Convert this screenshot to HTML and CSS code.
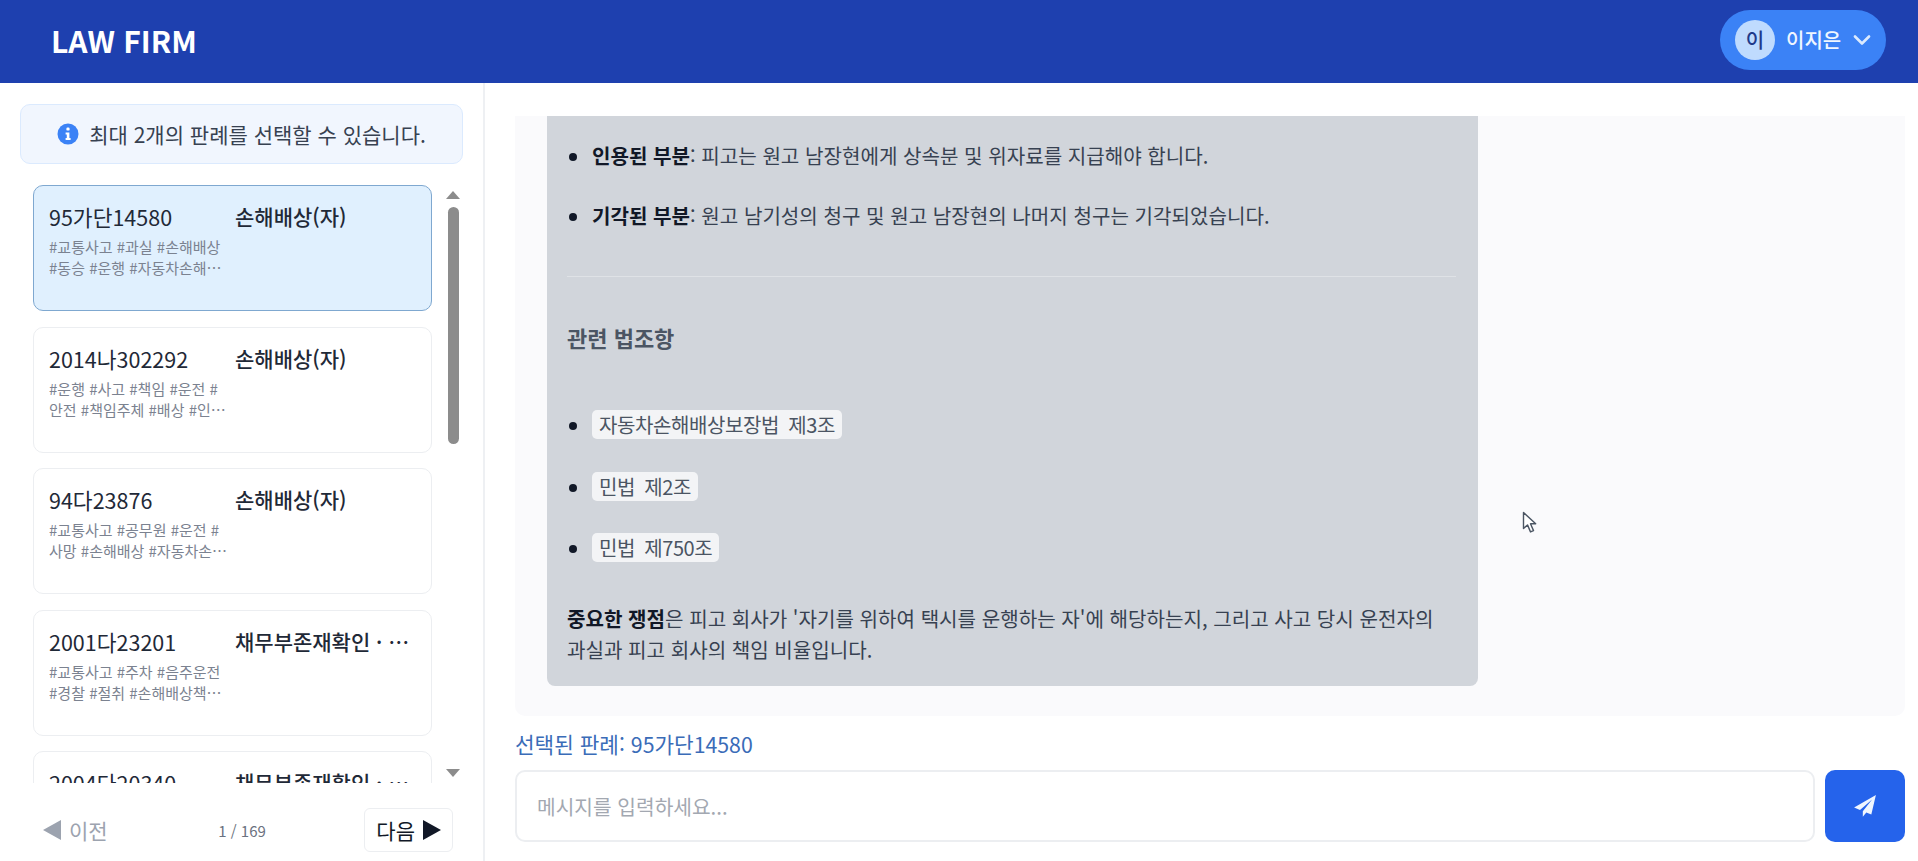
FILE: index.html
```html
<!DOCTYPE html>
<html lang="ko">
<head>
<meta charset="UTF-8">
<meta name="viewport" content="width=device-width,initial-scale=1.0">
<title>Law Firm</title>
<link rel="stylesheet" href="styles.css">
</head>
<body>
<header class="topbar">
<div class="logo">LAW FIRM</div>
<div class="user">
<span class="avatar">이</span>
<span class="user-name">이지은</span>
<svg class="chevron" width="18" height="10" viewBox="0 0 18 10"><path d="M2 1.5l7 7 7-7" fill="none" stroke="#dbeafe" stroke-width="2.6" stroke-linecap="round" stroke-linejoin="round"/></svg>
</div>
</header>
<div class="main">
<aside class="sidebar">
<div class="notice">
<svg width="22" height="22" viewBox="0 0 22 22"><circle cx="11" cy="11" r="10.5" fill="#3b82f6"/><rect x="9.4" y="4.6" width="3.2" height="3" rx="1.2" fill="#fff"/><path d="M8.6 9.4h3.8v5.6h1.2v2H8.6v-2h1.2v-3.6H8.6z" fill="#fff"/></svg>
<span>최대 2개의 판례를 선택할 수 있습니다.</span>
</div>
<div class="list-wrap">
<div class="case-list">
<div class="case selected">
<div class="case-no">95가단14580</div>
<div class="case-type">손해배상(자)</div>
<div class="case-tags">#교통사고 #과실 #손해배상 #동승 #운행 #자동차손해배상보장법</div>
</div>
<div class="case">
<div class="case-no">2014나302292</div>
<div class="case-type">손해배상(자)</div>
<div class="case-tags">#운행 #사고 #책임 #운전 # 안전 #책임주체 #배상 #인명피해 #보험</div>
</div>
<div class="case">
<div class="case-no">94다23876</div>
<div class="case-type">손해배상(자)</div>
<div class="case-tags">#교통사고 #공무원 #운전 # 사망 #손해배상 #자동차손해배상보장법</div>
</div>
<div class="case">
<div class="case-no">2001다23201</div>
<div class="case-type">채무부존재확인 · 손해배상</div>
<div class="case-tags">#교통사고 #주차 #음주운전 #경찰 #절취 #손해배상책임 #보험금</div>
</div>
<div class="case">
<div class="case-no">2004다20340</div>
<div class="case-type">채무부존재확인 · 손해배상</div>
<div class="case-tags">#교통사고 #보험 #운전</div>
</div>
</div>
<div class="scrollbar">
<span class="arrow-up"></span>
<div class="track"><div class="thumb"></div></div>
<span class="arrow-down"></span>
</div>
</div>
<div class="pager">
<button class="page-btn disabled"><span class="tri-left"></span>이전</button>
<span class="page-num">1 / 169</span>
<button class="page-btn next">다음<span class="tri-right"></span></button>
</div>
</aside>
<section class="content">
<div class="chat">
<div class="bubble">
<ul class="points">
<li><strong>인용된 부분</strong>: 피고는 원고 남장현에게 상속분 및 위자료를 지급해야 합니다.</li>
<li><strong>기각된 부분</strong>: 원고 남기성의 청구 및 원고 남장현의 나머지 청구는 기각되었습니다.</li>
</ul>
<hr>
<h3>관련 법조항</h3>
<ul class="laws">
<li><code>자동차손해배상보장법 제3조</code></li>
<li><code>민법 제2조</code></li>
<li><code>민법 제750조</code></li>
</ul>
<p><strong>중요한 쟁점</strong>은 피고 회사가 '자기를 위하여 택시를 운행하는 자'에 해당하는지, 그리고 사고 당시 운전자의 과실과 피고 회사의 책임 비율입니다.</p>
</div>
<svg class="cursor" width="16" height="24" viewBox="0 0 16 24"><path d="M1.5 1.5v16l4-3.6 3 7 3-1.3-3-6.8h5.2z" fill="#fff" stroke="#4b5563" stroke-width="1.4" stroke-linejoin="round"/></svg>
</div>
<div class="selected-label">선택된 판례: 95가단14580</div>
<div class="composer">
<div class="input">메시지를 입력하세요...</div>
<button class="send">
<svg width="24" height="24" viewBox="0 0 22 22"><path d="M21 1L1 12.4l5.4 2.2L17.5 5 9 15.8v5l3.2-3.8 4.6 1.9z" fill="#eff6ff"/></svg>
</button>
</div>
</section>
</div>
</body>
</html>
```
FILE: styles.css
```css
*{
box-sizing:border-box;
}
html,body{
margin:0;
height:100%;
overflow:hidden;
}
body{
font-family:"Noto Sans CJK KR","Noto Sans",sans-serif;
background:#ffffff;
color:#1f2937;
display:flex;
flex-direction:column;
}
.topbar{
height:83px;
flex:none;
background:#1e40af;
display:flex;
align-items:center;
justify-content:space-between;
padding:0 32px 0 51px;
color:#fff;
}
.logo{
font-size:30px;
font-weight:700;
margin-top:-4px;
}
.user{
height:60px;
width:166px;
margin-top:-4px;
background:#3b82f6;
border-radius:30px;
display:flex;
align-items:center;
padding:0 15px;
}
.avatar{
width:40px;
height:40px;
flex:none;
border-radius:50%;
background:#bfdbfe;
color:#1e3a8a;
font-size:20px;
font-weight:500;
display:flex;
align-items:center;
justify-content:center;
}
.user-name{
font-size:20px;
font-weight:500;
margin:0 12px 0 11px;
color:#eff6ff;
white-space:nowrap;
}
.chevron{
flex:none;
}
.main{
flex:1;
display:flex;
min-height:0;
}
.sidebar{
width:485px;
flex:none;
border-right:2px solid #eef0f3;
padding:21px 0 0 20px;
display:flex;
flex-direction:column;
}
.notice{
width:443px;
height:60px;
flex:none;
background:#f1f6fe;
border:1px solid #dbeafe;
border-radius:10px;
display:flex;
align-items:center;
justify-content:center;
gap:10px;
font-size:21px;
color:#374151;
}
.list-wrap{
flex:1;
min-height:0;
display:flex;
margin-top:21px;
overflow:hidden;
}
.case-list{
width:399px;
margin-left:13px;
display:flex;
flex-direction:column;
gap:15.5px;
}
.case{
height:126px;
flex:none;
background:#fff;
border:1px solid #eceef1;
border-radius:10px;
padding:15px 15px 0;
display:grid;
grid-template-columns:186px minmax(0,1fr);
align-content:start;
row-gap:4px;
}
.case.selected{
background:#e0f0fe;
border-color:#7fa8d0;
}
.case-no{
font-size:21.5px;
color:#1f2937;
white-space:nowrap;
}
.case-type{
font-size:21px;
font-weight:500;
color:#1f2937;
white-space:nowrap;
overflow:hidden;
text-overflow:ellipsis;
}
.case-tags{
width:181px;
font-size:15px;
line-height:21px;
color:#7b8290;
overflow:hidden;
display:-webkit-box;
-webkit-box-orient:vertical;
-webkit-line-clamp:2;
}
.scrollbar{
width:14px;
margin:6px 0 0 14px;
display:flex;
flex-direction:column;
align-items:center;
}
.arrow-up{
border:7px solid transparent;
border-top:0;
border-bottom:8px solid #8c8c8c;
}
.arrow-down{
border:7px solid transparent;
border-bottom:0;
border-top:8px solid #8c8c8c;
margin-bottom:6px;
}
.track{
flex:1;
width:100%;
margin:8px 0 7px;
}
.thumb{
width:11px;
height:237px;
margin:0 auto;
border-radius:6px;
background:#8c8c8c;
}
.pager{
height:78px;
flex:none;
width:440px;
display:flex;
align-items:center;
justify-content:space-between;
padding:0 7px 0 23px;
}
.page-btn{
height:44px;
font-family:inherit;
font-size:21px;
color:#111827;
background:#fff;
border:1px solid #eceef1;
border-radius:6px;
display:flex;
align-items:center;
gap:8px;
padding:0 11px;
margin-top:16px;
}
.page-btn.disabled{
border:0;
padding:0;
color:#9ca3af;
}
.tri-left{
border:10px solid transparent;
border-left:0;
border-right:18px solid #9ca3af;
}
.tri-right{
border:10px solid transparent;
border-right:0;
border-left:18px solid #111827;
}
.page-num{
font-size:15px;
color:#6b7280;
margin:16px 0 0 12px;
}
.content{
flex:1;
min-width:0;
display:flex;
flex-direction:column;
padding:33px 13px 19px 30px;
}
.chat{
position:relative;
height:600px;
flex:none;
background:#fafafc;
padding:0 0 30px 32px;
border-radius:0 0 10px 10px;
}
.bubble{
width:931px;
height:570px;
background:#d1d5db;
border-radius:0 0 8px 8px;
padding:25px 22px 0 20px;
font-size:20.1px;
color:#374151;
overflow:hidden;
word-break:keep-all;
}
.bubble strong{
color:#111827;
font-weight:700;
}
.bubble ul{
margin:0;
padding-left:24px;
}
.points li{
height:60px;
line-height:30px;
padding-left:1px;
}
.points li::marker,.laws li::marker{
color:#111827;
}
.bubble hr{
border:0;
border-top:1px solid #dfe2e6;
margin:15px 0 0;
}
.bubble h3{
margin:43px 0 57px;
font-size:22px;
line-height:34px;
font-weight:600;
color:#4b5563;
}
.laws li{
height:61.5px;
line-height:28px;
padding-left:1px;
}
.laws code{
font-family:"Noto Sans CJK KR",sans-serif;
font-size:20px;
color:#4b5563;
background:#f3f4f6;
border-radius:5px;
padding:0 7px;
word-spacing:4px;
letter-spacing:-0.4px;
}
.bubble p{
margin:7px 0 0;
line-height:31px;
}
.cursor{
position:absolute;
left:1007px;
top:395px;
}
.selected-label{
font-size:21.3px;
color:#3a6cb8;
margin-top:14px;
line-height:28px;
}
.composer{
display:flex;
gap:10px;
margin-top:12px;
}
.input{
flex:1;
height:72px;
background:#fff;
border:2px solid #eceef1;
border-radius:10px;
display:flex;
align-items:center;
padding:0 20px;
font-size:20.3px;
color:#a3a8b1;
}
.send{
width:80px;
height:72px;
border:0;
border-radius:10px;
background:#2563eb;
display:flex;
align-items:center;
justify-content:center;
}
```
